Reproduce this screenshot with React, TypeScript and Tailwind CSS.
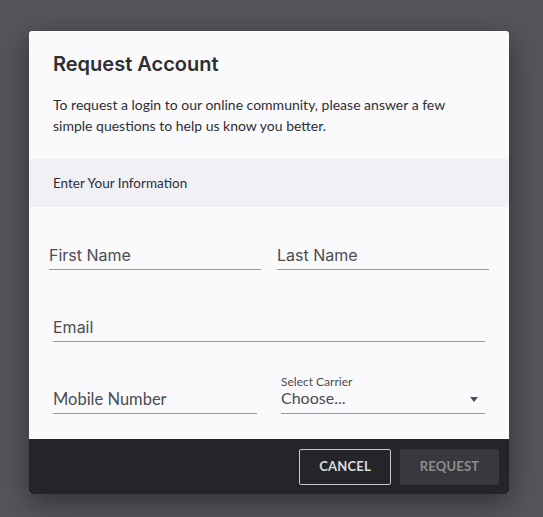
function Field({ label, className = '', font = "font-['Inter',sans-serif] text-[16px]" }: { label: string; className?: string; font?: string }) {
    return (
        <div className={`h-[40px] flex items-end pb-[4px] border-b border-[#9a9aa0] ${className}`}>
            <span className={`leading-[20px] text-[#4b4b53] ${font}`}>{label}</span>
        </div>
    )
}

export default function App() {
    return (
        <div className="min-h-[517px] w-full bg-[#54565b] pt-[31px]">
            <div className="ml-[29px] w-[480px] rounded-[3px] overflow-hidden bg-[#fafafc] shadow-[0_8px_30px_rgba(0,0,0,0.45)] font-['Lato',sans-serif]">
                <div className="px-[24px] pt-[19px] pb-[23px]">
                    <h1 className="text-[20px] leading-[28px] font-semibold text-[#2e2e33] font-['Inter',sans-serif]">Request Account</h1>
                    <p className="mt-[16px] max-w-[420px] text-[14px] leading-[21px] text-[#2e2e33]">
                        To request a login to our online community, please answer a few simple questions to help us know you better.
                    </p>
                </div>

                <div className="h-[48px] bg-[#f1f1f5] px-[24px] flex items-center text-[13.5px] text-[#2e2e33]">
                    Enter Your Information
                </div>

                <div className="pt-[23px] pb-[25px] flex flex-col gap-[32px]">
                    <div className="px-[20px] grid grid-cols-2 gap-[16px]">
                        <Field label="First Name" />
                        <Field label="Last Name" />
                    </div>
                    <div className="px-[24px]">
                        <Field label="Email" />
                    </div>
                    <div className="px-[24px] grid grid-cols-2 gap-[24px]">
                        <Field label="Mobile Number" className="pb-[2px]" font="text-[16.5px]" />
                        <div className="h-[40px] flex flex-col justify-end pb-[5px] border-b border-[#9a9aa0]">
                            <span className="text-[12px] leading-[13px] text-[#4b4b53]">Select Carrier</span>
                            <div className="flex items-center justify-between pr-[7px]">
                                <span className="text-[16px] leading-[20px] text-[#4b4b53]">Choose...</span>
                                <svg width="8" height="5" viewBox="0 0 8 5" className="mt-[2px]">
                                    <path d="M0 0 L8 0 L4 5 Z" fill="#4b4b53" />
                                </svg>
                            </div>
                        </div>
                    </div>
                </div>

                <div className="h-[55px] bg-[#242529] flex items-center justify-end gap-[9px] pr-[10px]">
                    <button className="h-[36px] w-[92px] border border-[#c9c9cd] rounded-[2px] text-[13px] font-bold text-[#dcdcde] tracking-[0.2px]">
                        CANCEL
                    </button>
                    <button className="h-[36px] w-[99px] bg-[#38393d] rounded-[2px] text-[13px] font-bold text-[#8c8c90] tracking-[0.2px]">
                        REQUEST
                    </button>
                </div>
            </div>
        </div>
    )
}
